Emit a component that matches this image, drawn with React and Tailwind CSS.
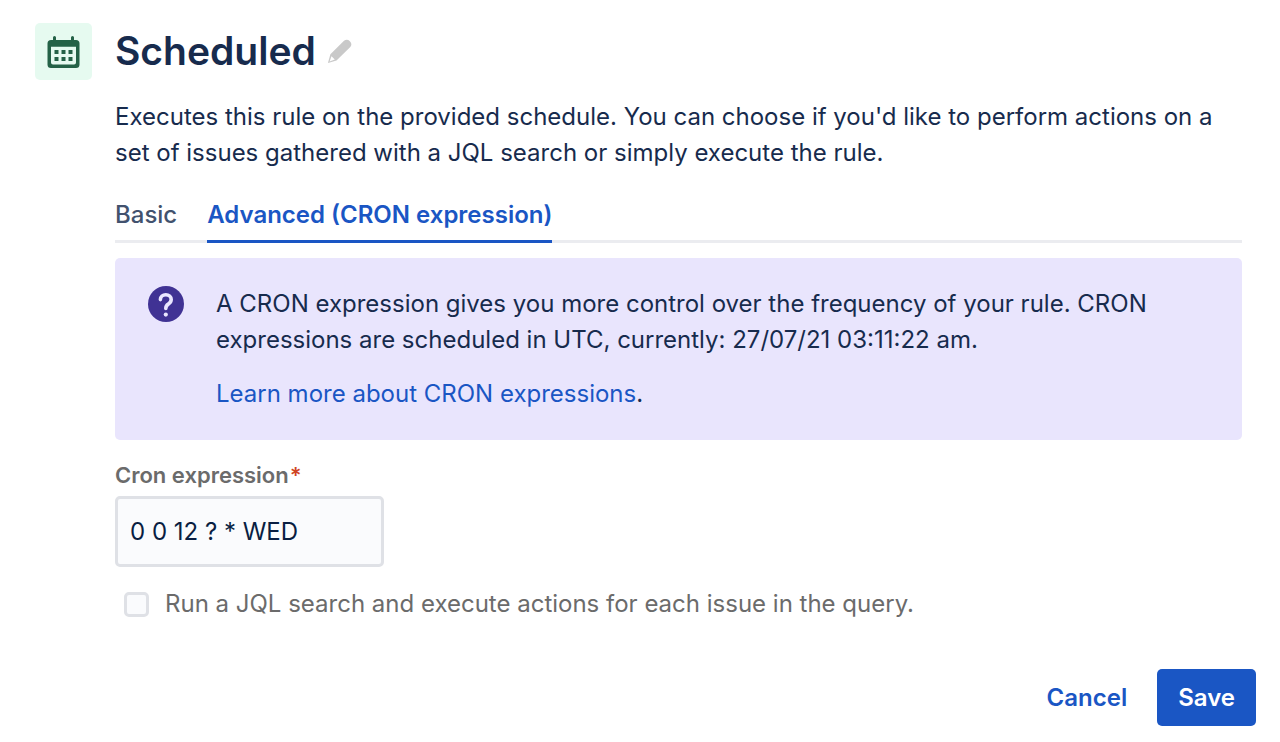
import { useState } from "react";

function CalendarIcon() {
  return (
    <svg viewBox="0 0 32 32" className="h-8 w-[33px]" aria-hidden="true">
      <path
        fill="#246247"
        fillRule="evenodd"
        d="M5.500 1.500a1.500 1.500 0 0 1 3 0V4h15V1.500a1.500 1.500 0 0 1 3 0V4H28.500A3.500 3.500 0 0 1 32 7.500V28.500a3.500 3.500 0 0 1-3.500 3.500h-25A3.500 3.500 0 0 1 0 28.500V7.500A3.500 3.500 0 0 1 3.500 4h2zM3.500 10.800V26.500a2 2 0 0 0 2 2h21a2 2 0 0 0 2-2V10.800z"
      />
      <path fill="#246247" d="M7 14h4v4H7zM14 14h4v4h-4zM21 14h4v4h-4zM7 21h4v4H7zM14 21h4v4h-4zM21 21h4v4h-4z" />
    </svg>
  );
}

function PencilIcon() {
  return (
    <svg viewBox="0 0 24 24" className="size-6" aria-hidden="true">
      <path
        fill="#c9c9c9"
        fillRule="evenodd"
        d="M16 1.800a4.500 4.500 0 0 1 6.300 6.300L8.500 21.500.900 23.800a.5.5 0 0 1-.7-.7L2.400 15.300zM3.500 17.200 1.600 22.400 6.800 20.500z"
      />
    </svg>
  );
}

function QuestionIcon() {
  return (
    <svg viewBox="0 0 36 36" className="size-9 shrink-0" aria-hidden="true">
      <circle cx="18" cy="18" r="18" fill="#403294" />
      <path
        d="M12.400 13.600c0-3 2.300-4.800 5.400-4.800s5.400 2 5.400 4.800c0 2.300-1.200 3.500-2.900 4.500-1.700 1-2.500 1.900-2.500 4.300"
        fill="none"
        stroke="#eae6ff"
        strokeWidth="3.600"
        strokeLinecap="round"
      />
      <circle cx="17.800" cy="28.600" r="2.100" fill="#eae6ff" />
    </svg>
  );
}

export default function App() {
  const [cron, setCron] = useState("0 0 12 ? * WED");
  const [tab, setTab] = useState("advanced");
  const tabs = [
    { id: "basic", label: "Basic" },
    { id: "advanced", label: "Advanced (CRON expression)" },
  ];

  return (
    <main className="bg-white pt-[23px] pr-6 pb-4 pl-[35px] font-[Inter,sans-serif] text-2xl leading-9 text-[#172b4d]">
      <div className="flex items-start gap-[23px] pr-[14px]">
        <div className="flex size-[57px] shrink-0 items-center justify-center rounded-[5px] bg-[#e6faf0]">
          <CalendarIcon />
        </div>
        <div className="min-w-0 flex-1">
          <header className="flex h-14 items-center gap-3">
            <h1 className="text-[39px] leading-[56px] font-semibold">Scheduled</h1>
            <button type="button" aria-label="Edit name">
              <PencilIcon />
            </button>
          </header>
          <p className="mt-5">
            Executes this rule on the provided schedule. You can choose if you'd like to perform actions on a set of
            issues gathered with a JQL search or simply execute the rule.
          </p>
          <div role="tablist" className="mt-[26px] flex gap-[30px] shadow-[inset_0_-3px_0_#ebecf0]">
            {tabs.map(({ id, label }) => (
              <button
                key={id}
                type="button"
                role="tab"
                aria-selected={tab === id}
                onClick={() => setTab(id)}
                className={
                  tab === id
                    ? "border-b-3 border-[#1a56c4] pb-[7px] font-semibold text-[#1a56c4]"
                    : "border-b-3 border-transparent pb-[7px] font-medium text-[#42526e]"
                }
              >
                {label}
              </button>
            ))}
          </div>
          <section className="mt-[15px] flex gap-8 rounded-[5px] bg-[#e9e5fd] px-[33px] py-7">
            <QuestionIcon />
            <div>
              <p>
                A CRON expression gives you more control over the frequency of your rule. CRON expressions are scheduled
                in UTC, currently: 27/07/21 03:11:22 am.
              </p>
              <p className="mt-[18px]">
                <a href="#cron" className="text-[#1a56c4]">
                  Learn more about CRON expressions
                </a>
                .
              </p>
            </div>
          </section>
          <label htmlFor="cron" className="mt-[21px] block text-[22px] leading-7 font-semibold text-[#6b6b6b]">
            Cron expression<span className="ml-px text-[#d04423]">*</span>
          </label>
          <input
            id="cron"
            type="text"
            value={cron}
            onChange={(e) => setCron(e.target.value)}
            className="mt-[7px] block h-[71px] w-[269px] rounded-[5px] border-3 border-[#dfe1e6] bg-[#fafbfd] px-3 text-[#091e42]"
          />
          <div className="mt-[19px] flex items-center gap-4 pl-[9px]">
            <input
              id="jql"
              type="checkbox"
              className="size-[25px] shrink-0 appearance-none rounded-[5px] border-3 border-[#dfe1e6] bg-[#fafbfd] checked:bg-[#1a56c4]"
            />
            <label htmlFor="jql" className="text-[#6b6b6b]">
              Run a JQL search and execute actions for each issue in the query.
            </label>
          </div>
        </div>
      </div>
      <footer className="mt-[47px] flex justify-end gap-[9px] font-semibold">
        <button type="button" className="h-[57px] px-[21px] text-[#1a56c4]">
          Cancel
        </button>
        <button type="button" className="h-[57px] rounded-[5px] bg-[#1a56c4] px-[21px] text-white">
          Save
        </button>
      </footer>
    </main>
  );
}
